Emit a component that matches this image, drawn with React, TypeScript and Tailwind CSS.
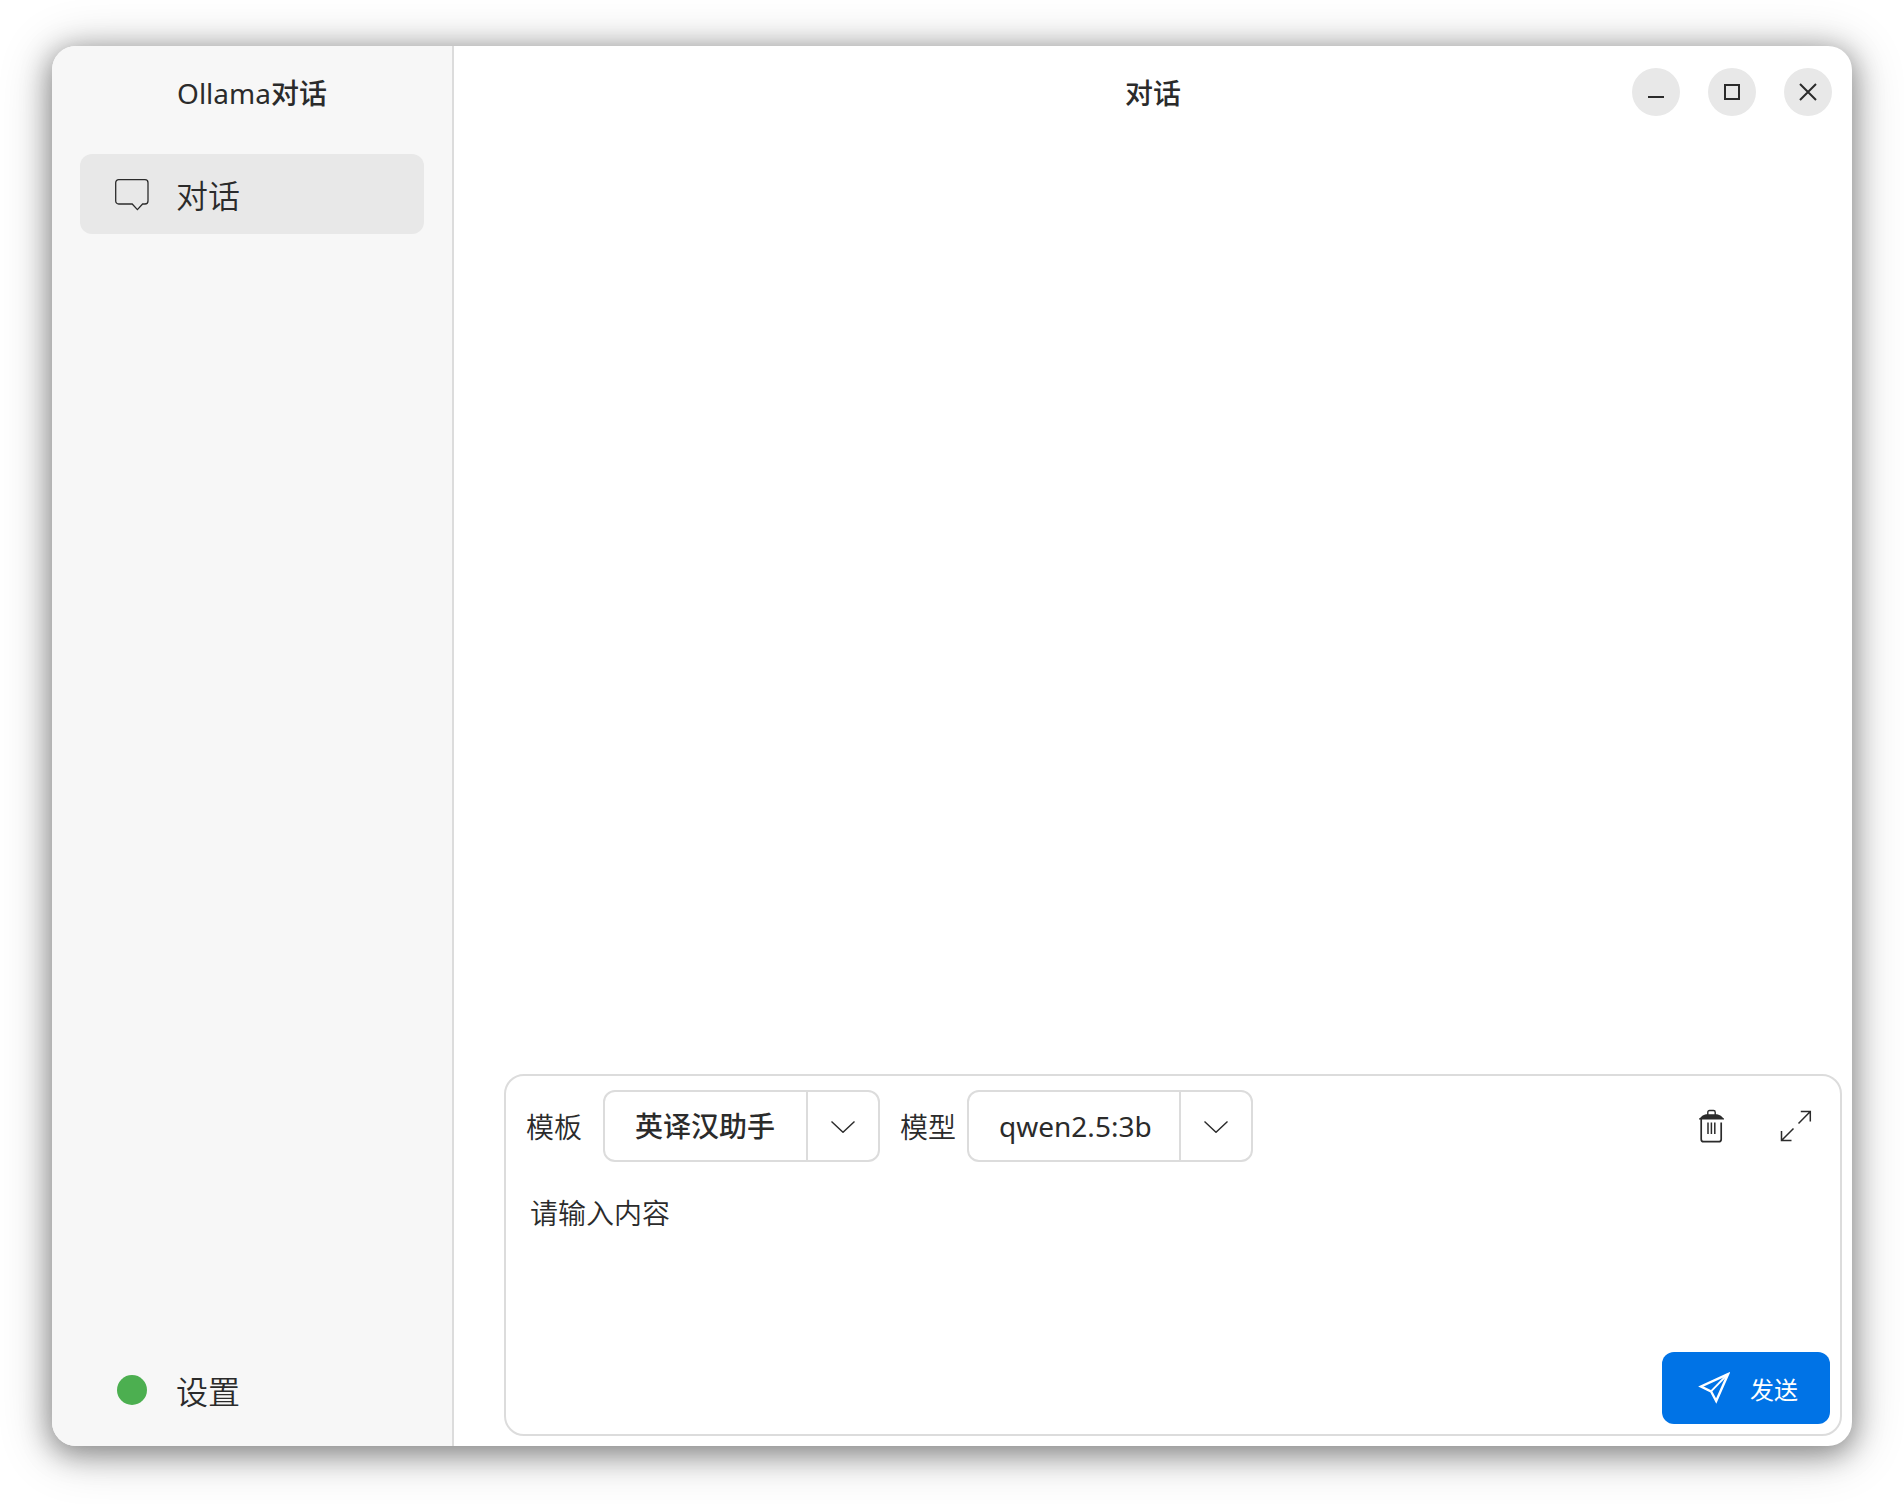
import type { ReactNode } from "react";

type SelectBoxProps = {
  id: string;
  label: string;
  options: string[];
  gap: string;
  className: string;
};

const templates = ["英译汉助手"];
const models = ["qwen2.5:3b"];

export default function App() {
  return (
    <div className="flex h-screen bg-white px-[52px] pt-[46px] pb-[58px] font-['Noto_Sans','Noto_Sans_CJK_SC',sans-serif] text-[#2b2b2b]">
      <div className="flex min-w-0 flex-1 overflow-hidden rounded-3xl bg-white shadow-[0_6px_28px_2px_rgba(0,0,0,0.38),0_6px_52px_4px_rgba(0,0,0,0.2)]">
        <Sidebar />
        <main className="flex min-w-0 flex-1 flex-col">
          <TitleBar />
          <section className="flex-1" aria-label="消息" />
          <Composer />
        </main>
      </div>
    </div>
  );
}

function Sidebar() {
  return (
    <aside className="flex w-[402px] shrink-0 flex-col border-r-2 border-[#dcdcdc] bg-[#f7f7f7]">
      <h1 className="flex h-24 items-center justify-center pb-0.5 text-[28px] leading-10">
        Ollama<span className="font-medium">对话</span>
      </h1>
      <nav className="flex flex-1 flex-col justify-between px-7 pt-3 pb-4">
        <button type="button" className="flex h-20 items-center gap-[26px] rounded-xl bg-[#e8e8e8] pl-[34px] text-[32px]">
          <ChatIcon />
          <span className="pt-1 font-[350]">对话</span>
        </button>
        <button type="button" className="flex h-20 items-center gap-[26px] rounded-xl pl-[34px] text-[32px]">
          <span className="flex w-9 justify-center">
            <span className="size-[30px] rounded-full bg-[#4caf50]" />
          </span>
          <span className="pt-1 font-[350]">设置</span>
        </button>
      </nav>
    </aside>
  );
}

function TitleBar() {
  return (
    <header className="grid h-24 grid-cols-[1fr_auto_1fr] items-center px-5">
      <h2 className="col-start-2 pb-0.5 text-[28px] leading-10 font-medium">对话</h2>
      <div className="flex justify-end gap-7 pb-1">
        <WindowButton label="最小化">
          <path d="M16 29h16" />
        </WindowButton>
        <WindowButton label="最大化">
          <path d="M17 17h14v14h-14z" />
        </WindowButton>
        <WindowButton label="关闭">
          <path d="M16 16l16 16M32 16L16 32" />
        </WindowButton>
      </div>
    </header>
  );
}

function WindowButton({ label, children }: { label: string; children: ReactNode }) {
  return (
    <button type="button" aria-label={label} className="size-12 rounded-full bg-[#e8e8e8]">
      <svg viewBox="0 0 48 48" className="size-12" fill="none" stroke="currentColor" strokeWidth="2">
        {children}
      </svg>
    </button>
  );
}

function Composer() {
  return (
    <form className="mr-2.5 mb-2.5 ml-[50px] flex h-[362px] flex-col rounded-[20px] border-2 border-[#dcdcdc]">
      <div className="flex items-center gap-5 pt-3.5 pr-5 pl-5">
        <SelectBox id="template" label="模板" options={templates} gap="gap-[21px]" className="w-[277px] font-medium" />
        <SelectBox id="model" label="模型" options={models} gap="gap-[11px]" className="w-[286px]" />
        <div className="ml-auto flex gap-9">
          <button type="button" aria-label="清空" className="size-12">
            <TrashIcon />
          </button>
          <button type="button" aria-label="展开" className="size-12">
            <ExpandIcon />
          </button>
        </div>
      </div>
      <textarea
        aria-label="请输入内容"
        placeholder="请输入内容"
        className="mt-[30px] w-full flex-1 resize-none px-6 text-[28px] leading-[42px] font-[350] outline-none placeholder:text-[#2b2b2b]"
      />
      <div className="flex justify-end pr-2.5 pb-2.5">
        <button type="submit" className="flex h-[72px] items-center gap-5 rounded-xl bg-[#0073e6] pr-8 pl-9 text-2xl text-white">
          <SendIcon />
          <span className="pt-1">发送</span>
        </button>
      </div>
    </form>
  );
}

function SelectBox({ id, label, options, gap, className }: SelectBoxProps) {
  return (
    <div className={`flex items-center ${gap}`}>
      <label htmlFor={id} className="pt-0.5 text-[28px] leading-10 font-[350]">
        {label}
      </label>
      <div className="relative">
        <select
          id={id}
          className={`h-[72px] appearance-none rounded-xl border-2 border-[#dcdcdc] bg-transparent pr-24 pl-[30px] text-[28px] ${className}`}
        >
          {options.map((option) => (
            <option key={option}>{option}</option>
          ))}
        </select>
        <span className="pointer-events-none absolute inset-y-0.5 right-0.5 flex w-[72px] items-center justify-center border-l-2 border-[#dcdcdc] pt-0.5">
          <svg viewBox="0 0 24 12" className="h-3 w-6" fill="none" stroke="currentColor" strokeWidth="1.4">
            <path d="M0.5 0.5L12 11.3L23.5 0.5" />
          </svg>
        </span>
      </div>
    </div>
  );
}

function ChatIcon() {
  return (
    <svg viewBox="0 0 36 36" className="size-9" fill="none" stroke="currentColor" strokeWidth="1.3">
      <path d="M4.7 3.7H31a3 3 0 0 1 3 3V25a3 3 0 0 1-3 3H28.6L23.4 33.6L18.2 28H4.7a3 3 0 0 1-3-3V6.7a3 3 0 0 1 3-3z" />
    </svg>
  );
}

function TrashIcon() {
  return (
    <svg viewBox="0 0 48 48" className="size-12" fill="none" stroke="currentColor">
      <path d="M11 17.6V16.6C13 16 13.5 13 18 12.2H29C33.5 13 34.5 16 36 16.6V17.6z" fill="currentColor" stroke="none" />
      <path d="M19.8 13V10.2a1.7 1.7 0 0 1 1.7-1.7h4a1.7 1.7 0 0 1 1.7 1.7V13" strokeWidth="1.4" />
      <path d="M13.2 17V37.2a2.5 2.5 0 0 0 2.5 2.5h15a2.5 2.5 0 0 0 2.5-2.5V20.6" strokeWidth="1.7" />
      <path d="M20 20.5v11.5M23.4 20.5v11.5M26.8 20.5v11.5" strokeWidth="1.5" />
    </svg>
  );
}

function ExpandIcon() {
  return (
    <svg viewBox="0 0 48 48" className="size-12" fill="none" stroke="currentColor" strokeWidth="1.5">
      <path d="M28.8 9.5H38.3V19.5M38.3 9.5L26.5 21.5M9.5 29V38.5H19.5M9.5 38.5L21.5 26.5" />
    </svg>
  );
}

function SendIcon() {
  return (
    <svg viewBox="0 0 32 32" className="size-8" fill="none" stroke="currentColor">
      <path d="M30 2.2L3 14.5L13 19.3L18.2 29z" strokeWidth="2.4" />
      <path d="M13 19.3L29 3" strokeWidth="1.8" />
    </svg>
  );
}
